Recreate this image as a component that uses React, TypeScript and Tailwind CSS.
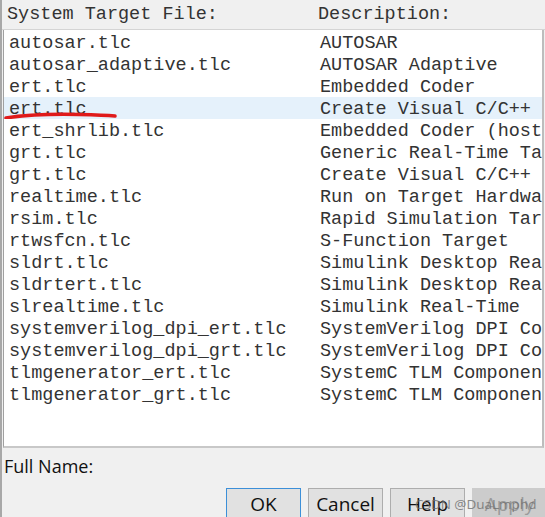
const rows: [string, string][] = [
  ["autosar.tlc", "AUTOSAR"],
  ["autosar_adaptive.tlc", "AUTOSAR Adaptive"],
  ["ert.tlc", "Embedded Coder"],
  ["ert.tlc", "Create Visual C/C++ Solution File for Embedded Coder"],
  ["ert_shrlib.tlc", "Embedded Coder (host-based shared library target)"],
  ["grt.tlc", "Generic Real-Time Target"],
  ["grt.tlc", "Create Visual C/C++ Solution File for Simulink Coder"],
  ["realtime.tlc", "Run on Target Hardware"],
  ["rsim.tlc", "Rapid Simulation Target"],
  ["rtwsfcn.tlc", "S-Function Target"],
  ["sldrt.tlc", "Simulink Desktop Real-Time"],
  ["sldrtert.tlc", "Simulink Desktop Real-Time (ERT)"],
  ["slrealtime.tlc", "Simulink Real-Time"],
  ["systemverilog_dpi_ert.tlc", "SystemVerilog DPI Component (Embedded Coder)"],
  ["systemverilog_dpi_grt.tlc", "SystemVerilog DPI Component"],
  ["tlmgenerator_ert.tlc", "SystemC TLM Component (Embedded Coder)"],
  ["tlmgenerator_grt.tlc", "SystemC TLM Component"],
];

const mono = "font-['Courier_New','Liberation_Mono',monospace] text-[18.5px] text-[#333]";
const ui = "font-['Segoe_UI','Open_Sans','Noto_Sans',sans-serif]";

function Button({ label, primary, disabled }: { label: string; primary?: boolean; disabled?: boolean }) {
  return (
    <div
      className={`w-[75px] h-[32px] shrink-0 flex items-center justify-center text-[19px] border ${ui} ${
        primary
          ? "border-[#3c8fd8] bg-[#e1e1e1] text-[#111]"
          : disabled
            ? "border-[#cccccc] bg-[#cccccc] text-[#9a9a9a]"
            : "border-[#adadad] bg-[#e1e1e1] text-[#111]"
      }`}
    >
      {label}
    </div>
  );
}

export default function App() {
  return (
    <div className="w-[545px] h-[517px] overflow-hidden bg-[#f0f0f0] border-l-2 border-[#a8a8a8] flex flex-col relative">
      <div className="h-[30px] shrink-0 flex items-center border-b border-[#d4d4d4] pr-[3px]">
        <div className={`${mono} w-[316px] pl-[5px] whitespace-pre`}>System Target File:</div>
        <div className={`${mono} whitespace-pre`}>Description:</div>
      </div>
      <div className="ml-[1px] mr-[1px] h-[418px] shrink-0 bg-white border-l border-r-2 border-b-2 border-l-[#a0a0a0] border-r-[#bdbdbd] border-b-[#c8c8c8] pt-[1px]">
        {rows.map(([file, desc], i) => (
          <div
            key={i}
            className={`h-[22px] flex items-center pt-[4px] overflow-hidden whitespace-pre relative ${
              i === 3 ? "bg-[#e5f1fb]" : ""
            }`}
          >
            <div className={`${mono} w-[316px] shrink-0 pl-[5px]`}>{file}</div>
            <div className={`${mono}`}>{desc}</div>
            {i === 3 && (
              <svg className="absolute left-0 top-[15px]" width="120" height="10" viewBox="0 0 120 10">
                <path
                  d="M2 6 C 20 3, 50 2, 75 2.5 C 95 3, 105 3.5, 111 4"
                  stroke="#e01a1a"
                  strokeWidth="3.5"
                  fill="none"
                  strokeLinecap="round"
                />
              </svg>
            )}
          </div>
        ))}
      </div>
      <div className={`${ui} shrink-0 text-[18px] text-[#111] pl-[2px] mt-[7px] leading-[22px]`}>Full Name:</div>
      <div className="flex shrink-0 justify-end gap-[7px] mt-[11px] mr-[-2px]">
        <Button label="OK" primary />
        <Button label="Cancel" />
        <Button label="Help" />
        <Button label="Apply" disabled />
      </div>
      {/* csdn watermark over the buttons */}
      <div className={`${ui} absolute z-10 left-[413px] top-[494px] whitespace-nowrap text-[13.5px] text-[#6f6f6f] opacity-80 pointer-events-none`}>
        CSDN @DuaLmphd
      </div>
    </div>
  );
}
